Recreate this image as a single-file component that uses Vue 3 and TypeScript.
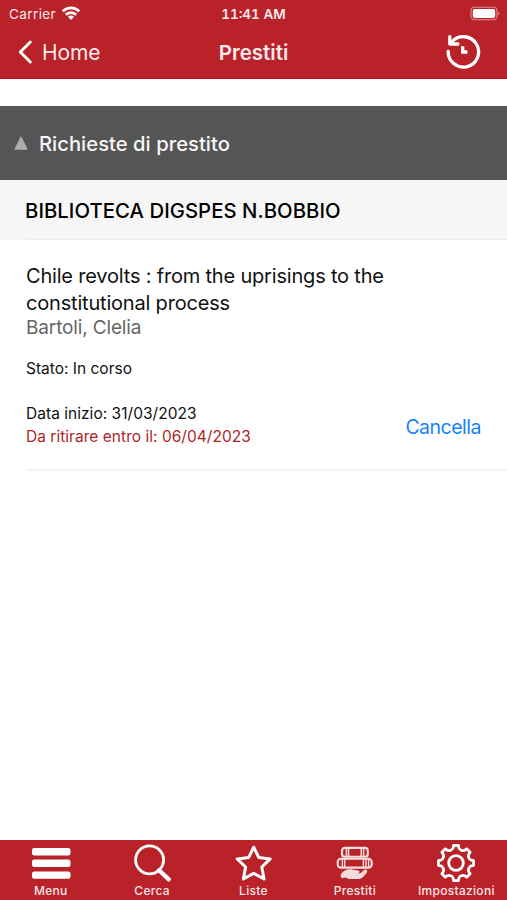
<script setup lang="ts">
interface Loan {
  title: string
  author: string
  status: string
  start: string
  pickup: string
}

interface Tab {
  id: string
  label: string
}

const loans: Loan[] = [
  {
    title: 'Chile revolts : from the uprisings to the constitutional process',
    author: 'Bartoli, Clelia',
    status: 'In corso',
    start: '31/03/2023',
    pickup: '06/04/2023',
  },
]

const tabs: Tab[] = [
  { id: 'menu', label: 'Menu' },
  { id: 'search', label: 'Cerca' },
  { id: 'lists', label: 'Liste' },
  { id: 'loans', label: 'Prestiti' },
  { id: 'settings', label: 'Impostazioni' },
]

// Outline of an eight-toothed gear centred on 20,20, with curved valleys between the teeth
function gearPath(): string {
  const at = (r: number, deg: number): string => {
    const a = (deg * Math.PI) / 180
    return `${(20 + r * Math.sin(a)).toFixed(2)} ${(20 - r * Math.cos(a)).toFixed(2)}`
  }
  let d = ''
  for (let i = 0; i < 8; i++) {
    const c = i * 45
    d += `${i === 0 ? 'M' : 'L'}${at(17.7, c - 8)}L${at(17.7, c + 8)}L${at(15.4, c + 10.5)}`
    d += `C${at(13.6, c + 15)} ${at(13.6, c + 30)} ${at(15.4, c + 34.5)}`
  }
  return d + 'Z'
}
const gear = gearPath()
</script>

<template>
  <div class="screen">
    <header class="top">
      <div class="status">
        <div class="carrier">
          <span class="carrier-name">Carrier</span>
          <svg class="wifi" width="20" height="15" viewBox="0 0 20 15">
            <g fill="none" stroke="#fff" stroke-width="2.7">
              <path d="M1.8 5.4C6.4.7 13.6.7 18.2 5.4" />
              <path d="M4.8 8.7C7.7 5.8 12.3 5.8 15.2 8.7" />
            </g>
            <path d="M6.9 10.8C8.6 9.2 11.4 9.2 13.1 10.8L10 14Z" fill="#fff" />
          </svg>
        </div>
        <span class="clock">11:41 AM</span>
        <svg class="battery" width="31" height="16" viewBox="0 0 31 16">
          <rect x="2" y="1.2" width="26" height="12.6" rx="3.6" fill="none" stroke="#e08f93" stroke-width="1.1" />
          <rect x="3.8" y="3" width="22.4" height="9" rx="2" fill="#fff" />
          <path d="M29.2 5.5Q31.4 7.5 29.2 9.5Z" fill="#e08f93" />
        </svg>
      </div>
      <nav class="bar">
        <a class="back">
          <svg width="16" height="26" viewBox="0 0 16 26">
            <path d="M13.3 3L3.3 13L13.3 23" fill="none" stroke="#fff" stroke-width="2.9" stroke-linecap="round" stroke-linejoin="round" />
          </svg>
          <span class="back-label">Home</span>
        </a>
        <h1 class="heading">Prestiti</h1>
        <svg class="history" width="38" height="38" viewBox="0 0 38 38">
          <g fill="none" stroke="#fff" stroke-width="3.3" stroke-linecap="round" stroke-linejoin="round">
            <path d="M4.2 18.5A15.2 15.2 0 1 0 8.2 8.6" />
            <path d="M5.8 3.6V11H14" />
            <path d="M18.7 13.2V19H23.4" stroke-linecap="butt" stroke-linejoin="miter" />
          </g>
        </svg>
      </nav>
    </header>

    <main class="content">
      <section class="group">
        <h2 class="group-title">
          <svg width="14" height="14" viewBox="0 0 14 14"><path d="M7 .8L13.1 13.2H.9Z" fill="#adadad" stroke="#adadad" stroke-linejoin="round" /></svg>
          <span>Richieste di prestito</span>
        </h2>
        <h3 class="library">BIBLIOTECA DIGSPES N.BOBBIO</h3>
        <article v-for="loan in loans" :key="loan.title" class="loan">
          <p class="title">{{ loan.title }}</p>
          <p class="author">{{ loan.author }}</p>
          <p class="state">Stato: {{ loan.status }}</p>
          <div class="dates-row">
            <div>
              <p class="start">Data inizio: {{ loan.start }}</p>
              <p class="pickup">Da ritirare entro il: {{ loan.pickup }}</p>
            </div>
            <button class="cancel" type="button">Cancella</button>
          </div>
        </article>
      </section>
    </main>

    <footer class="tabs">
      <a v-for="tab in tabs" :key="tab.id" class="tab">
        <svg width="40" height="40" viewBox="0 0 40 40">
          <g v-if="tab.id === 'menu'" fill="#fff">
            <rect x="1" y="5" width="38.5" height="7.4" rx="2.2" />
            <rect x="1" y="16.6" width="38.5" height="7.4" rx="2.2" />
            <rect x="1" y="28.4" width="38.5" height="7.4" rx="2.2" />
          </g>
          <g v-else-if="tab.id === 'search'" fill="none" stroke="#fff">
            <circle cx="17.6" cy="16.8" r="14" stroke-width="2.8" />
            <path d="M27 27.2L36.8 36.4" stroke-width="4.2" stroke-linecap="round" />
          </g>
          <path v-else-if="tab.id === 'lists'" d="M19.7 4.2L24.7 14.4L36.2 15.9L27.8 24L30 36L19.7 30.4L9.4 36L11.6 24L3.2 15.9L14.7 14.4Z" fill="none" stroke="#fff" stroke-width="3" stroke-linejoin="round" />
          <g v-else-if="tab.id === 'loans'" fill="none" stroke="#f3dddd" stroke-width="2.1">
            <rect x="7" y="4.9" width="25.8" height="8.8" rx="2.8" />
            <path d="M11.4 4.7V13.7M13.6 4.7V13.7M26.2 4.7V13.7M28.6 4.7V13.7" stroke-width="1.5" />
            <rect x="2.7" y="15.8" width="34" height="8.8" rx="3.2" />
            <path d="M7.4 15.8V24.8M9.8 15.8V24.8M28.4 15.8V24.8M31 15.8V24.8M33.6 15.8V24.8" stroke-width="1.4" />
            <path d="M5.6 32C8.6 26.8 14 25.6 18 26.8L23.2 27.6C25.4 28.4 24.6 30.3 22.4 30.5L25.4 30.2L29.4 26.8C31.2 26 33 27.2 31.8 29.2C29.6 33 26.6 36 23.3 36.1H14L10.3 34.4L6.4 35.2Z" fill="#f3dddd" stroke="none" />
          </g>
          <g v-else fill="none" stroke="#fff" stroke-width="2.8" stroke-linejoin="round">
            <path :d="gear" />
            <circle cx="20" cy="20" r="7.3" />
          </g>
        </svg>
        <span class="tab-label">{{ tab.label }}</span>
      </a>
    </footer>
  </div>
</template>

<style>
body {
  margin: 0;
  background: #fff;
}
</style>

<style scoped>
.screen {
  display: flex;
  flex-direction: column;
  width: 100%;
  height: 900px;
  overflow: hidden;
  font-family: Inter, "Liberation Sans", sans-serif;
  color: #111;
}
h1, h2, h3, p {
  margin: 0;
}
svg {
  display: block;
  flex: none;
}
.top {
  box-sizing: border-box;
  height: 79px;
  background: #b92229;
  border-bottom: 1px solid #b3131c;
  color: #fbe9ea;
}
.status {
  display: grid;
  grid-template-columns: 1fr auto 1fr;
  align-items: center;
  height: 27px;
  padding: 0 7px;
}
.carrier {
  display: flex;
  align-items: center;
  gap: 5px;
  padding-left: 2px;
}
.carrier-name {
  width: 47px;
  font-size: 13.5px;
  letter-spacing: 0.4px;
  white-space: nowrap;
}
.clock {
  font-size: 13.5px;
  font-weight: 600;
  font-variant-numeric: tabular-nums;
}
.battery {
  justify-self: end;
}
.bar {
  display: grid;
  grid-template-columns: 1fr auto 1fr;
  align-items: center;
  height: 50px;
  padding: 0 17px;
}
.back {
  display: flex;
  align-items: center;
  gap: 9px;
}
.back-label {
  font-size: 21px;
  letter-spacing: -0.1px;
}
.heading {
  font-size: 20.5px;
  font-weight: 600;
}
.history {
  justify-self: end;
  margin-right: 8px;
}
.content {
  flex: 1;
  padding-top: 27px;
}
.group-title {
  display: flex;
  align-items: center;
  gap: 11px;
  box-sizing: border-box;
  height: 74px;
  padding-left: 14px;
  background: #555;
  color: #f7f7f7;
  font-size: 20.2px;
  font-weight: 550;
  letter-spacing: 0.04px;
}
.library {
  height: 60px;
  box-sizing: border-box;
  padding-left: 25px;
  background: linear-gradient(#ececec, #ececec) 26px 100% / 100% 1px no-repeat, #f6f6f6;
  color: #000;
  font-size: 20.3px;
  font-weight: 550;
  letter-spacing: 0.06px;
  line-height: 61px;
}
.loan {
  margin-left: 26px;
  padding: 23px 26px 21px 0;
  border-bottom: 2px solid #f3f3f3;
}
.title {
  width: 380px;
  font-size: 20px;
  line-height: 27px;
  letter-spacing: -0.19px;
}
.author {
  font-size: 19px;
  line-height: 22px;
  letter-spacing: -0.14px;
  color: #666;
}
.state {
  margin-top: 19px;
  font-size: 15.5px;
  line-height: 22px;
}
.dates-row {
  display: flex;
  align-items: center;
  justify-content: space-between;
  margin-top: 22px;
}
.start, .pickup {
  font-size: 15.5px;
  line-height: 23px;
  letter-spacing: 0.03px;
}
.pickup {
  color: #ab1f27;
}
.cancel {
  border: 0;
  padding: 3px 0 0;
  background: none;
  font-family: inherit;
  font-size: 19.5px;
  line-height: 24px;
  letter-spacing: -0.5px;
  color: #1583f7;
}
.tabs {
  display: flex;
  justify-content: space-between;
  box-sizing: border-box;
  height: 60px;
  background: #b92229;
}
.tab {
  display: flex;
  flex: 1;
  min-width: 0;
  flex-direction: column;
  align-items: center;
  padding-top: 3px;
}
.tab-label {
  font-size: 12px;
  font-weight: 500;
  line-height: 15px;
  letter-spacing: 0.3px;
  color: #fbe6e7;
}
</style>
